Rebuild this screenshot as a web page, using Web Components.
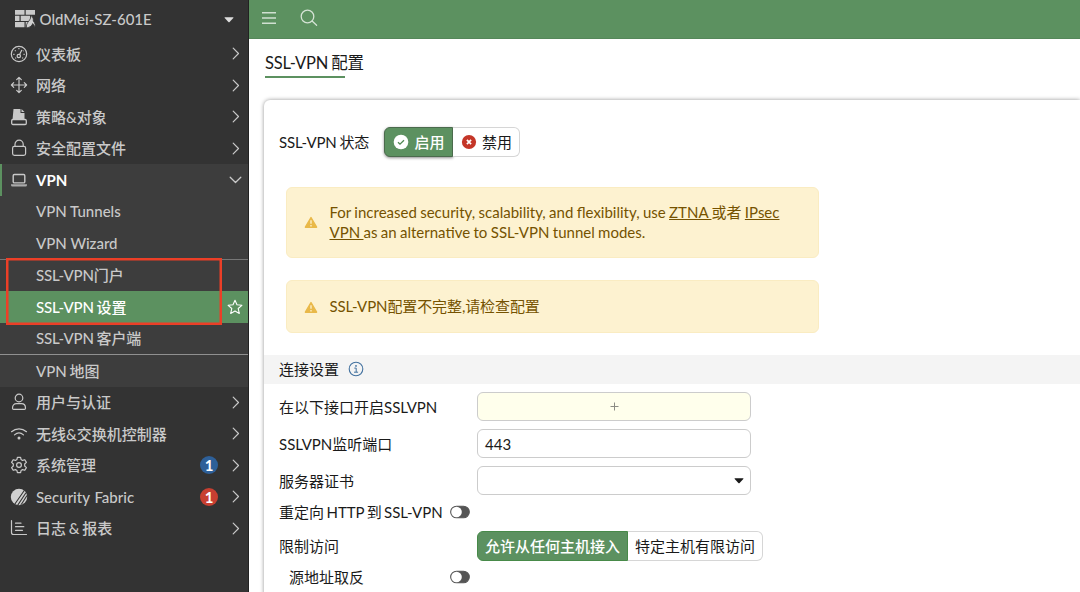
<!DOCTYPE html>
<html lang="zh-CN">
<head>
<meta charset="utf-8">
<title>SSL-VPN 配置</title>
<style>
    html, body {
        margin: 0;
        height: 100%;
        overflow: hidden;
    }

    body {
        font-family: Lato, "Noto Sans CJK SC", sans-serif;
        font-size: 15px;
        line-height: 20px;
        color: #1a1a1a;
        background: #fff;
    }
</style>
</head>
<body>
<app-shell>
    <side-nav slot="nav" device="OldMei-SZ-601E">
        <nav-item icon="gauge">仪表板</nav-item>
        <nav-item icon="move">网络</nav-item>
        <nav-item icon="policy">策略&amp;对象</nav-item>
        <nav-item icon="lock">安全配置文件</nav-item>
        <nav-group icon="laptop" label="VPN">
            <nav-link latin>VPN Tunnels</nav-link>
            <nav-link latin>VPN Wizard</nav-link>
            <nav-marked>
                <nav-link>SSL-VPN门户</nav-link>
                <nav-link active>SSL-VPN 设置</nav-link>
            </nav-marked>
            <nav-link>SSL-VPN 客户端</nav-link>
            <nav-link divided>VPN 地图</nav-link>
        </nav-group>
        <nav-item icon="user">用户与认证</nav-item>
        <nav-item icon="wifi">无线&amp;交换机控制器</nav-item>
        <nav-item icon="gear" badge="1" tone="#2e6099">系统管理</nav-item>
        <nav-item icon="fabric" badge="1" tone="#c83f31" latin>Security Fabric</nav-item>
        <nav-item icon="report">日志 &amp; 报表</nav-item>
    </side-nav>

    <top-bar slot="top"></top-bar>

    <settings-page heading="SSL-VPN 配置">
        <status-row label="SSL-VPN 状态">
            <button-group shadow>
                <group-button selected icon="ok">启用</group-button>
                <group-button icon="no">禁用</group-button>
            </button-group>
        </status-row>
        <alert-box>For increased security, scalability, and flexibility, use <u>ZTNA </u>或者 <u>IPsec</u><br><u>VPN </u>as an alternative to SSL-VPN tunnel modes.</alert-box>
        <alert-box tight>SSL-VPN配置不完整,请检查配置</alert-box>
        <section-title>连接设置</section-title>
        <form-row label="在以下接口开启SSLVPN"><field-box kind="add"></field-box></form-row>
        <form-row label="SSLVPN监听端口"><field-box>443</field-box></form-row>
        <form-row label="服务器证书"><field-box kind="select"></field-box></form-row>
        <form-row compact label="重定向 HTTP 到 SSL-VPN"><toggle-switch slot="switch"></toggle-switch></form-row>
        <form-row label="限制访问">
            <button-group>
                <group-button selected>允许从任何主机接入</group-button>
                <group-button>特定主机有限访问</group-button>
            </button-group>
        </form-row>
        <form-row compact nested label="源地址取反"><toggle-switch slot="switch"></toggle-switch></form-row>
    </settings-page>
</app-shell>

<script>
const ICONS = {
    brick: `<svg width="21" height="18" viewBox="0 0 21 18"><path d="M0 0h9.500v4.700H0zM10.700 0H20v4.700h-9.300zM0 5.800h4.500v5.200H0zM5.700 5.800h9.300V11H5.700zM0 12.100h9.500v5.200H0zM10.700 12.100h4v5.200h-4z" fill="#c9c9c9"/><path d="M11.700 18c-.9-2.900.4-4.800 2.100-6.900 1.300-1.600 2.100-3.300 2.300-5.600 2.100 1.700 2.300 3.700 2.200 5.500 1.600 1.700 2.600 4.500 1.500 6.600-.3-1.700-.9-2.800-2.100-4-.6 2.300-2.800 3.600-6 4.400z" fill="#d0d0d0" stroke="#333" stroke-width=".8"/></svg>`,
    gauge: `<svg width="18" height="18" viewBox="0 0 18 18"><g fill="none" stroke="currentColor" stroke-width="1.200"><circle cx="9" cy="9" r="7.700"/><circle cx="8.800" cy="11" r="1.700"/><path d="M9.600 9.500 11.700 5.300" stroke-linecap="round"/><path d="M3.300 9.300h1.200M13.500 9.300h1.200M4.900 5.400l.8.800M8.300 3.600h1.200M13 6.200l.5-.5M5 13h1.200M12 13h1.200"/></g></svg>`,
    move: `<svg width="18" height="18" viewBox="0 0 18 18"><g fill="none" stroke="currentColor" stroke-width="1.200" stroke-linecap="round" stroke-linejoin="round"><path d="M9 1.500v15M1.500 9h15M6.700 3.700 9 1.400l2.300 2.300M6.700 14.300 9 16.600l2.300-2.300M3.700 6.700 1.400 9l2.300 2.300M14.300 6.700 16.600 9l-2.300 2.300"/></g></svg>`,
    policy: `<svg width="18" height="18" viewBox="0 0 18 18"><path d="M3.500 1h7v4h4v6H2.600z" fill="currentColor"/><path d="M11.500 1l3 3h-3z" fill="currentColor"/><rect x="1.700" y="11.500" width="14.600" height="5" rx="1.200" fill="none" stroke="currentColor" stroke-width="1.300"/></svg>`,
    lock: `<svg width="18" height="18" viewBox="0 0 18 18"><g fill="none" stroke="currentColor" stroke-width="1.200"><rect x="2.600" y="7.300" width="13" height="9" rx="1.800"/><path d="M5 7.300V5.200a4.100 4.100 0 0 1 8.200 0v2.100"/></g></svg>`,
    laptop: `<svg width="18" height="18" viewBox="0 0 18 18"><rect x="3.200" y="3.500" width="11.600" height="8.400" rx="1.200" fill="none" stroke="currentColor" stroke-width="1.400"/><path d="M1 13.200h16v.8a1.500 1.500 0 0 1-1.500 1.500h-13A1.500 1.500 0 0 1 1 14z" fill="#aaa"/></svg>`,
    user: `<svg width="18" height="18" viewBox="0 0 18 18"><g fill="none" stroke="currentColor" stroke-width="1.200"><circle cx="9" cy="5" r="3.800"/><path d="M2.500 15.200c0-2.700 1.600-4.500 4-4.500h5c2.400 0 4 1.800 4 4.500 0 .8-.5 1.200-1.200 1.200H3.700c-.7 0-1.200-.4-1.200-1.200z"/></g></svg>`,
    wifi: `<svg width="18" height="18" viewBox="0 0 18 18"><g fill="none" stroke="currentColor" stroke-width="1.200" stroke-linecap="round"><path d="M1.500 6.700c4.400-3.900 10.600-3.900 15 0M4.500 9.900c2.700-2.400 6.300-2.400 9 0"/></g><circle cx="9" cy="13" r="1.500" fill="currentColor"/></svg>`,
    gear: `<svg width="18" height="18" viewBox="0 0 18 18"><g fill="none" stroke="currentColor" stroke-width="1.200" stroke-linejoin="round"><path d="M7.400 1.300h3.200l.5 2.300 1.400.8 2.300-.7 1.600 2.700L14.700 8v2l1.700 1.600-1.600 2.700-2.300-.7-1.400.8-.5 2.300H7.400l-.5-2.300-1.400-.8-2.300.7-1.600-2.700L3.300 10V8L1.600 6.400l1.600-2.700 2.300.7 1.400-.8z"/><circle cx="9" cy="9" r="2.400"/></g></svg>`,
    fabric: `<svg width="18" height="18" viewBox="0 0 18 18"><clipPath id="disc"><circle cx="9" cy="9" r="8.200"/></clipPath><g clip-path="url(#disc)"><path d="M0 0h18v18H0z" fill="#d0d0d0"/><path d="M4.200 17 14.600 2M7.300 17.800 15.800 5M10.300 18 17 7.500" fill="none" stroke="#333" stroke-width="1.100"/></g></svg>`,
    report: `<svg width="18" height="18" viewBox="0 0 18 18"><path d="M1.500 1.500v12a2 2 0 0 0 2 2h13M5.500 4.200h5.500M5.500 7.700h8.300M5.500 11.300h7" fill="none" stroke="currentColor" stroke-width="1.200" stroke-linecap="round"/></svg>`,
    right: `<svg width="8" height="13" viewBox="0 0 8 13"><path d="M1.200 1.200 6.500 6.500l-5.300 5.300" fill="none" stroke="currentColor" stroke-width="1.200" stroke-linecap="round" stroke-linejoin="round"/></svg>`,
    down: `<svg width="13" height="8" viewBox="0 0 13 8"><path d="M1.200 1.200 6.500 6.500l5.300-5.300" fill="none" stroke="currentColor" stroke-width="1.300" stroke-linecap="round" stroke-linejoin="round"/></svg>`,
    caret: `<svg width="10" height="6" viewBox="0 0 10 6"><path d="M1 .3h8q.8 0 .3.700L5.600 4.900q-.6.600-1.200 0L.7 1Q.2.300 1 .3z" fill="currentColor"/></svg>`,
    star: `<svg width="16" height="16" viewBox="0 0 16 16"><path d="M8 1.300l2 4.500 4.900.5-3.700 3.200 1.100 4.900L8 11.900l-4.300 2.500 1.100-4.900L1.100 6.300 6 5.800z" fill="none" stroke="#fff" stroke-width="1.100" stroke-linejoin="round"/></svg>`,
    menu: `<svg width="14" height="14" viewBox="0 0 14 14"><path d="M0 1.800h14M0 7h14M0 12.200h14" stroke="#d0e0d1" stroke-width="1.400" fill="none"/></svg>`,
    search: `<svg width="18" height="18" viewBox="0 0 18 18"><g fill="none" stroke="#d5e3d5" stroke-width="1.300" stroke-linecap="round"><circle cx="7.500" cy="7.500" r="6.300"/><path d="M12.100 12.100 16.600 16.300"/></g></svg>`,
    ok: `<svg width="16" height="16" viewBox="0 0 16 16"><circle cx="8" cy="8" r="7.300" fill="#fff"/><path d="M5 8.200l2 2 4-4" fill="none" stroke="#4f8852" stroke-width="1.300"/></svg>`,
    no: `<svg width="16" height="16" viewBox="0 0 16 16"><circle cx="8" cy="8" r="7.100" fill="#c43628"/><path d="M5.900 5.900l4.200 4.200M10.100 5.900l-4.200 4.200" stroke="#fff" stroke-width="1.700"/></svg>`,
    warn: `<svg width="14" height="13" viewBox="0 0 14 13"><path d="M7 1.500 12.600 11.200H1.400z" fill="#e9b949" stroke="#e9b949" stroke-width="1.400" stroke-linejoin="round"/><path d="M7 4.200v3.600M7 9.100v1.300" stroke="#fdf1d0" stroke-width="1.300"/></svg>`,
    info: `<svg width="16" height="16" viewBox="0 0 16 16"><circle cx="8" cy="8" r="6.800" fill="none" stroke="#42719f" stroke-width="1.100"/><path d="M6.300 7.100h1.900v4M6 11.200h4.100" fill="none" stroke="#42719f" stroke-width="1"/><circle cx="8" cy="4.900" r=".9" fill="#42719f"/></svg>`,
    plus: `<svg width="9" height="9" viewBox="0 0 9 9"><path d="M4.500.5v8M.5 4.500h8" stroke="#8c8c84" stroke-width="1"/></svg>`,
    toggle: `<svg width="20" height="14" viewBox="0 0 20 14"><rect x=".7" y="1.200" width="18.600" height="11.600" rx="5.800" fill="#555" stroke="#555" stroke-width="1.100"/><circle cx="6.500" cy="7" r="5.300" fill="#fff"/></svg>`
};

// Shared base: every element renders once into an open shadow root
class BaseElement extends HTMLElement {
    constructor() {
        super();
        this.attachShadow({ mode: 'open' });
    }

    connectedCallback() {
        this.shadowRoot.innerHTML = `<style>svg { display: block; flex: none; }${this.styles()}</style>${this.render()}`;
    }

    styles() {
        return ':host { display: block; }';
    }

    render() {
        return '<slot></slot>';
    }
}

class AppShell extends BaseElement {
    styles() {
        return `
            :host { display: grid; grid-template-columns: 249px 1fr; height: 592px; overflow: hidden; }
            main { display: flex; flex-direction: column; min-width: 0; }
        `;
    }

    render() {
        return '<slot name="nav"></slot><main><slot name="top"></slot><slot></slot></main>';
    }
}

class SideNav extends BaseElement {
    styles() {
        return `
            :host {
                display: block;
                box-sizing: border-box;
                background: #333;
                border-right: 1px solid #222;
                color: #c9c9c9;
                font-weight: 500;
                overflow: hidden;
            }
            header { display: flex; align-items: center; height: 38px; padding: 0 14px 0 15px; box-sizing: border-box; }
            span { flex: 1; margin-left: 3.5px; }
            .caret { margin-top: 1px; color: #ddd; }
        `;
    }

    render() {
        return `<header>${ICONS.brick}<span>${this.getAttribute('device')}</span><i class="caret">${ICONS.caret}</i></header><slot></slot>`;
    }
}

class NavItem extends BaseElement {
    styles() {
        return `
            :host {
                display: flex;
                align-items: center;
                box-sizing: border-box;
                height: 31.5px;
                padding: 0 8.5px 0 10px;
                word-spacing: -1px;
            }
            :host([latin]) { word-spacing: 1px; }
            .text { flex: 1; margin-left: 8px; white-space: nowrap; }
            .badge {
                width: 18px;
                height: 18px;
                margin-right: 13.5px;
                border-radius: 50%;
                line-height: 18px;
                font-weight: 700;
                text-align: center;
                color: #fff;
            }
        `;
    }

    render() {
        const badge = this.getAttribute('badge');
        const badgeHtml = badge ? `<span class="badge" style="background:${this.getAttribute('tone')}">${badge}</span>` : '';
        return `${ICONS[this.getAttribute('icon')]}<span class="text"><slot></slot></span>${badgeHtml}${ICONS.right}`;
    }
}

class NavGroup extends BaseElement {
    styles() {
        return `
            :host { display: block; background: #3d3d3d; }
            .head {
                display: flex;
                align-items: center;
                box-sizing: border-box;
                height: 31.5px;
                padding: 0 6.5px 0 8px;
                border-left: 2px solid #5c9160;
            }
            b { flex: 1; margin-left: 8px; color: #fff; }
        `;
    }

    render() {
        return `<div class="head">${ICONS[this.getAttribute('icon')]}<b>${this.getAttribute('label')}</b>${ICONS.down}</div><slot></slot>`;
    }
}

class NavLink extends BaseElement {
    styles() {
        return `
            :host {
                display: flex;
                align-items: center;
                justify-content: space-between;
                height: 31.5px;
                padding: 0 5px 0 36px;
                white-space: nowrap;
                letter-spacing: -.15px;
                word-spacing: -.9px;
            }
            :host([latin]) { letter-spacing: 0; word-spacing: 0; }
            :host([active]) { background: #5c9160; color: #fff; }
            :host([divided]) { border-top: 1px solid #909090; letter-spacing: 0; word-spacing: -1px; }
        `;
    }

    render() {
        return `<span><slot></slot></span>${this.hasAttribute('active') ? ICONS.star : ''}`;
    }
}

// Links framed by a red outline that lies over the rows
class NavMarked extends BaseElement {
    styles() {
        return `
            :host { display: block; position: relative; border-top: 1px solid #777; }
            .frame {
                position: absolute;
                inset: -2px 26px -2px 6px;
                border: 2px solid #ec3f27;
                box-shadow: inset 0 0 0 .5px #ec3f27;
                pointer-events: none;
            }
        `;
    }

    render() {
        return '<slot></slot><div class="frame"></div>';
    }
}

class TopBar extends BaseElement {
    styles() {
        return `
            :host {
                display: flex;
                align-items: center;
                gap: 24px;
                box-sizing: border-box;
                height: 39px;
                padding: 0 13px 2px;
                background: #5c9160;
                border-bottom: 1px solid #55875a;
            }
        `;
    }

    render() {
        return ICONS.menu + ICONS.search;
    }
}

class SettingsPage extends BaseElement {
    styles() {
        return `
            :host { display: flex; flex-direction: column; flex: 1; padding: 13px 0 0 15px; }
            h1 {
                align-self: flex-start;
                margin: 0 0 22px 1px;
                font-size: 16.5px;
                line-height: 22px;
                font-weight: 400;
                letter-spacing: -.18px;
                word-spacing: -1px;
                padding-bottom: 4px;
                white-space: nowrap;
            }
            h1::after { content: ""; display: block; width: 80px; height: 2px; margin-top: 2px; margin-bottom: -4px; background: #5c9160; }
            section {
                flex: 1;
                border-radius: 6px 0 0 0;
                background: #fff;
                box-shadow: 0 0 4px rgba(0, 0, 0, .42);
            }
        `;
    }

    render() {
        return `<h1>${this.getAttribute('heading')}</h1><section><slot></slot></section>`;
    }
}

class StatusRow extends BaseElement {
    styles() {
        return `
            :host { display: flex; align-items: center; height: 30px; padding: 27px 0 30px 15px; }
            label { width: 105px; white-space: nowrap; letter-spacing: -.15px; word-spacing: -.8px; }
        `;
    }

    render() {
        return `<label>${this.getAttribute('label')}</label><slot></slot>`;
    }
}

class ButtonGroup extends BaseElement {
    styles() {
        return `
            :host { display: inline-flex; height: 30px; border-radius: 6px; }
            :host([shadow]) { --group-shadow: 0 1px 3px rgba(0, 0, 0, .45); --selected-border: #4b6b4d; }
        `;
    }
}

class GroupButton extends BaseElement {
    styles() {
        return `
            :host {
                display: flex;
                align-items: center;
                gap: 5.5px;
                box-sizing: border-box;
                height: 30px;
                padding: 0 7px;
                border: 1px solid #d6d6d6;
                border-left: 0;
                border-radius: 0 6px 6px 0;
                white-space: nowrap;
                background: #fff;
            }
            :host([selected]) {
                padding: 0 7px;
                border: 1px solid var(--selected-border, #478a49);
                border-radius: 6px 0 0 6px;
                background: #5c9160;
                color: #fff;
                font-weight: 500;
                box-shadow: var(--group-shadow, none);
            }
            :host([icon]) { padding-left: 8px; }
        `;
    }

    render() {
        return `${ICONS[this.getAttribute('icon')] || ''}<span><slot></slot></span>`;
    }
}

class AlertBox extends BaseElement {
    styles() {
        return `
            :host {
                display: flex;
                align-items: center;
                gap: 11px;
                box-sizing: border-box;
                width: 532.5px;
                margin: 0 0 22px 22.3px;
                padding: 15px 20px 15px 17.2px;
                border: 1px solid #faecc2;
                border-radius: 6px;
                background: #fdf2d0;
                color: #755200;
                line-height: 19.7px;
                word-spacing: -.46px;
            }
            :host([tight]) { padding: 16px 20px 14.4px 17.2px; letter-spacing: -.1px; }
        `;
    }

    render() {
        return `${ICONS.warn}<div><slot></slot></div>`;
    }
}

class SectionTitle extends BaseElement {
    styles() {
        return `
            :host {
                display: flex;
                align-items: center;
                gap: 8.5px;
                height: 29.5px;
                margin-bottom: 8px;
                padding-left: 15px;
                background: #f4f4f4;
            }
        `;
    }

    render() {
        return `<slot></slot>${ICONS.info}`;
    }
}

class FormRow extends BaseElement {
    styles() {
        return `
            :host { display: flex; align-items: center; height: 29px; margin-bottom: 8px; padding-left: 15px; }
            :host([compact]) { height: 18.5px; padding-bottom: 1.5px; }
            label { display: flex; align-items: center; justify-content: space-between; box-sizing: border-box; width: 191px; margin-right: 7px; white-space: nowrap; word-spacing: -1.4px; }
            :host([nested]) label { padding-left: 10px; }
        `;
    }

    render() {
        return `<label>${this.getAttribute('label')}<slot name="switch"></slot></label><slot></slot>`;
    }
}

class FieldBox extends BaseElement {
    styles() {
        return `
            :host {
                display: flex;
                align-items: center;
                box-sizing: border-box;
                width: 274px;
                height: 29px;
                padding: 0 7px;
                border: 1px solid #ccc;
                border-radius: 6px;
                background: #fff;
            }
            :host([kind="add"]) { justify-content: center; background: #ffffec; }
            :host([kind="select"]) { justify-content: flex-end; padding-right: 6px; }
        `;
    }

    render() {
        const glyphs = { add: ICONS.plus, select: ICONS.caret };
        return `<slot></slot>${glyphs[this.getAttribute('kind')] || ''}`;
    }
}

class ToggleSwitch extends BaseElement {
    render() {
        return ICONS.toggle;
    }
}

customElements.define('app-shell', AppShell);
customElements.define('side-nav', SideNav);
customElements.define('nav-item', NavItem);
customElements.define('nav-group', NavGroup);
customElements.define('nav-link', NavLink);
customElements.define('nav-marked', NavMarked);
customElements.define('top-bar', TopBar);
customElements.define('settings-page', SettingsPage);
customElements.define('status-row', StatusRow);
customElements.define('button-group', ButtonGroup);
customElements.define('group-button', GroupButton);
customElements.define('alert-box', AlertBox);
customElements.define('section-title', SectionTitle);
customElements.define('form-row', FormRow);
customElements.define('field-box', FieldBox);
customElements.define('toggle-switch', ToggleSwitch);
</script>
</body>
</html>
